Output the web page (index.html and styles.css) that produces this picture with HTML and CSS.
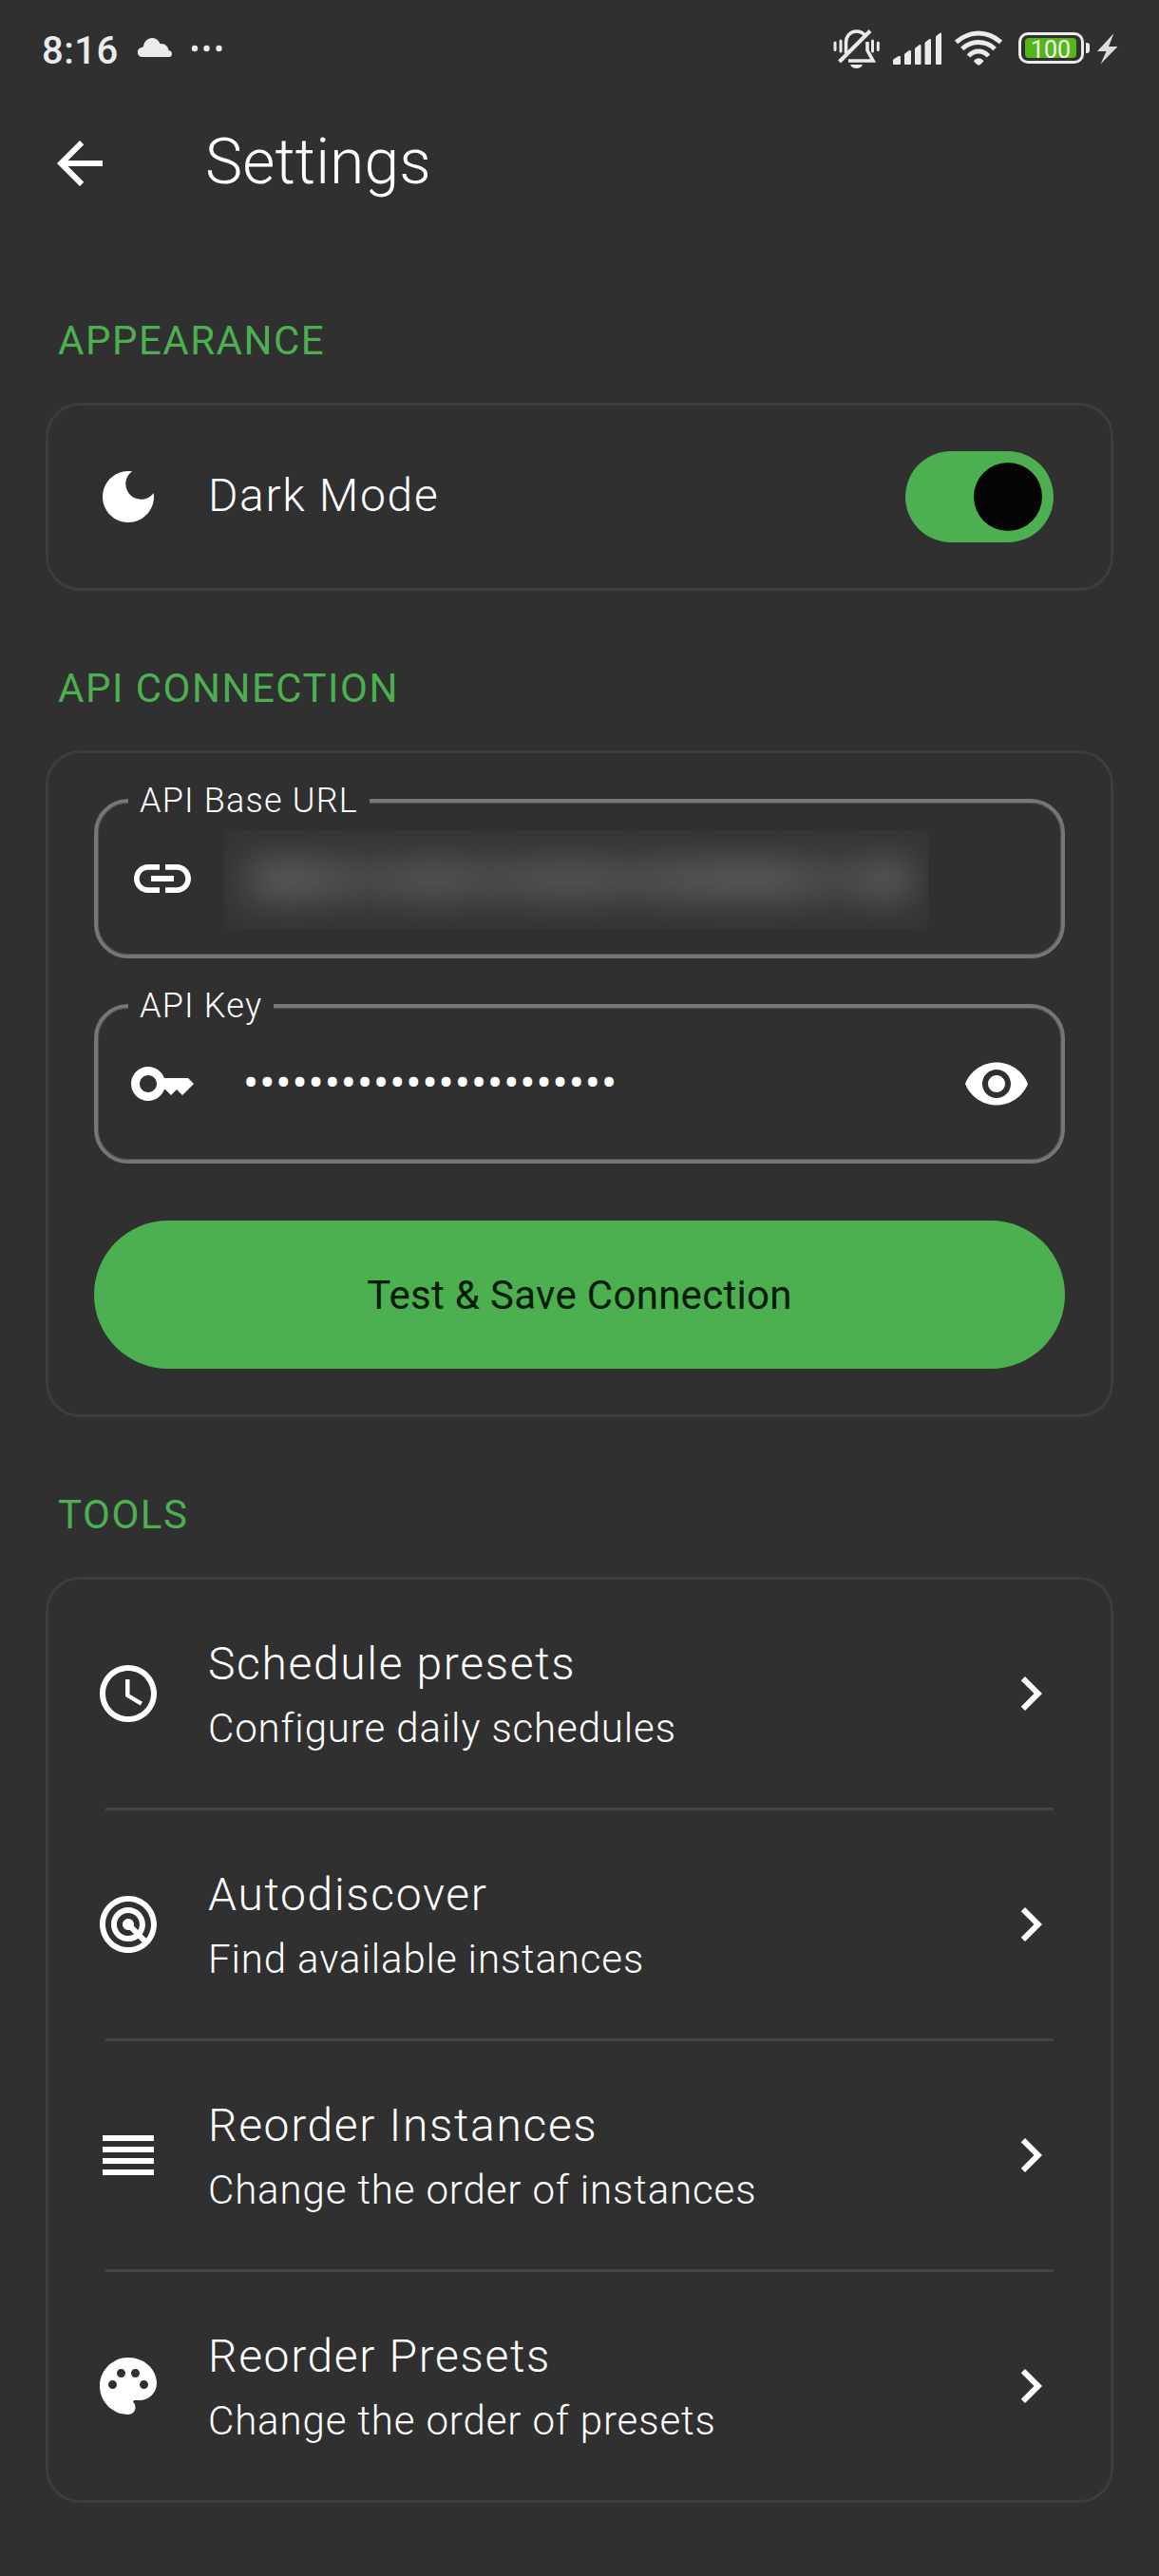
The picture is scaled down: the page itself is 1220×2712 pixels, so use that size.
FILE: index.html
```html
<!DOCTYPE html>
<html lang="en">
<head>
<meta charset="utf-8">
<title>Settings</title>
<link rel="stylesheet" href="styles.css">
</head>
<body>
<header class="status">
  <span class="clock">8:16</span>
  <svg class="cloud" width="36" height="20" viewBox="0 0 36 20"><path d="M5 20a5 5 0 0 1-.6-10A5.500 5.500 0 0 1 6 9C6.500 3.500 10.500 0 15 0c4 0 7 2.200 8.500 6.200C28 5.500 32 8.500 32.500 13 35 13.200 36 15 36 16.700 36 18.700 34.600 20 33 20z"/></svg>
  <svg class="more" width="34" height="8" viewBox="0 0 34 8"><circle cx="4" cy="4" r="3.200"/><circle cx="16.500" cy="4" r="3.200"/><circle cx="29.500" cy="4" r="3.200"/></svg>
  <div class="status-right">
    <svg width="49" height="102" viewBox="876 0 49 102">
      <g fill="none" stroke="#ebebeb" stroke-width="3.600">
        <path d="M889.500 56V45C889.500 38 894 33 900.500 33c4 0 7 1.500 9 4.500M912 44v9l6 11H892"/>
        <path d="M882.500 65 915 32.500" stroke-width="4"/>
        <path d="M878 45v7.500M884 43v11M917.500 43v11M923.300 45v7.500" stroke-width="3" stroke-linecap="round"/>
      </g>
      <path d="M894 68h13c-1 2.500-3.500 4-6.500 4s-5.500-1.500-6.500-4z"/>
    </svg>
    <svg width="51" height="102" viewBox="940 0 51 102"><path d="M940 63.500q0-1 1-1.500l5-3q2-.5 2 1V67q0 1-1 1h-6q-1 0-1-1zM952 57.500q0-1 1-1.500l4-3q2-.5 2 1V67q0 1-1 1h-5q-1 0-1-1zM963 51.500q0-1 1-1.500l4-3q1.500-.5 1.500 1V67q0 1-1 1H964q-1 0-1-1zM973.500 45.500q0-1 1-1.500l4-3q1.500-.5 1.500 1V67q0 1-1 1h-4.500q-1 0-1-1zM985 39q0-1 1-1.500l3.500-2.800q1.500-.5 1.500 1V67q0 1-1 1h-4q-1 0-1-1z"/></svg>
    <svg width="50" height="102" viewBox="1005 0 50 102">
      <g fill="none" stroke="#ebebeb" stroke-width="4.800"><path d="M1006.500 44.500q10.500-9.500 23.500-9.500t23.500 9.500"/><path d="M1012.800 51.500q7.200-7 17.200-7t17.200 7"/><path d="M1019.500 59q4.500-5 10.500-5t10.500 5"/></g>
      <path d="M1025 64q2-2.800 5.200-2.800t5.200 2.800q.3 1-5.200 5-5.500-4-5.200-5z"/>
    </svg>
    <div class="battery"><span>100</span></div>
    <svg class="bolt" width="22" height="102" viewBox="1155 0 22 102"><path d="M1172.500 35 1155 54h9.500L1158.500 67.500 1176.500 49h-9.500z" fill="#dcdcdc"/></svg>
  </div>
</header>

<div class="appbar">
  <svg class="icon" viewBox="0 0 24 24"><path d="M20 11H7.830l5.590-5.590L12 4l-8 8 8 8 1.410-1.410L7.830 13H20v-2z"/></svg>
  <h1>Settings</h1>
</div>

<main>
  <h2>APPEARANCE</h2>
  <section class="card">
    <div class="row dark-mode">
      <svg class="icon" viewBox="0 0 24 24"><path d="M12 3c-4.970 0-9 4.030-9 9s4.030 9 9 9 9-4.030 9-9c0-.46-.04-.92-.1-1.360-.98 1.370-2.580 2.260-4.400 2.260-2.980 0-5.400-2.420-5.400-5.400 0-1.810.89-3.420 2.260-4.400-.44-.06-.9-.1-1.360-.1z"/></svg>
      <div class="labels"><div class="title">Dark Mode</div></div>
      <div class="switch"><div class="thumb"></div></div>
    </div>
  </section>

  <h2>API CONNECTION</h2>
  <section class="card connection">
    <div class="field">
      <label>API Base URL</label>
      <svg class="icon" viewBox="0 0 24 24"><path d="M3.900 12c0-1.710 1.390-3.100 3.100-3.100h4V7H7c-2.760 0-5 2.240-5 5s2.240 5 5 5h4v-1.900H7c-1.710 0-3.100-1.390-3.100-3.100zM8 13h8v-2H8v2zm9-6h-4v1.900h4c1.710 0 3.100 1.390 3.100 3.100s-1.390 3.100-3.100 3.100h-4V17h4c2.760 0 5-2.240 5-5s-2.240-5-5-5z"/></svg>
      <div class="redacted"></div>
    </div>
    <div class="field">
      <label>API Key</label>
      <svg class="icon" viewBox="0 0 24 24"><path d="M21 10h-8.350C11.830 7.670 9.610 6 7 6c-3.310 0-6 2.690-6 6s2.690 6 6 6c2.610 0 4.830-1.670 5.650-4H13l2 2 2-2 2 2 4-4.040L21 10zM7 15c-1.650 0-3-1.350-3-3s1.350-3 3-3 3 1.350 3 3-1.350 3-3 3z"/></svg>
      <span class="secret">•••••••••••••••••••••••</span>
      <svg class="icon" viewBox="0 0 24 24"><path d="M12 4.500C7 4.500 2.730 7.610 1 12c1.730 4.390 6 7.500 11 7.500s9.270-3.110 11-7.500c-1.730-4.390-6-7.500-11-7.500zM12 17c-2.760 0-5-2.240-5-5s2.240-5 5-5 5 2.240 5 5-2.240 5-5 5zm0-8c-1.660 0-3 1.340-3 3s1.340 3 3 3 3-1.340 3-3-1.340-3-3-3z"/></svg>
    </div>
    <button>Test &amp; Save Connection</button>
  </section>

  <h2>TOOLS</h2>
  <section class="card">
    <div class="row">
      <svg class="icon" viewBox="0 0 24 24"><path d="M11.990 2C6.470 2 2 6.480 2 12s4.470 10 9.990 10C17.520 22 22 17.520 22 12S17.520 2 11.990 2zM12 20c-4.420 0-8-3.580-8-8s3.580-8 8-8 8 3.580 8 8-3.580 8-8 8zm.5-13H11v6l5.250 3.150.75-1.230-4.500-2.670z"/></svg>
      <div class="labels"><div class="title">Schedule presets</div><div class="sub">Configure daily schedules</div></div>
      <svg class="icon" viewBox="0 0 24 24"><path d="M10 6 8.590 7.410 13.170 12l-4.580 4.590L10 18l6-6z"/></svg>
    </div>
    <div class="divider"></div>
    <div class="row">
      <svg class="icon" viewBox="0 0 24 24"><path d="M19.740 18.330C21.150 16.600 22 14.400 22 12c0-5.520-4.480-10-10-10S2 6.480 2 12s4.480 10 10 10c2.400 0 4.600-.85 6.330-2.260.27-.22.53-.46.78-.71.03-.03.05-.06.07-.08.2-.2.39-.41.56-.62zM12 20c-4.410 0-8-3.590-8-8s3.590-8 8-8 8 3.590 8 8c0 1.850-.63 3.540-1.690 4.900l-1.430-1.430c.69-.98 1.100-2.170 1.100-3.460 0-3.310-2.690-6-6-6s-6 2.690-6 6 2.690 6 6 6c1.300 0 2.510-.42 3.490-1.130l1.420 1.420C15.540 19.370 13.850 20 12 20zm1.920-7.490c.17-.66.02-1.380-.49-1.900l-.02-.02c-.77-.77-2-.78-2.780-.04-.01.01-.03.02-.05.04-.78.78-.78 2.050 0 2.830l.02.02c.52.51 1.250.67 1.910.49l1.510 1.510c-.6.36-1.290.58-2.040.58-2.210 0-4-1.790-4-4s1.790-4 4-4 4 1.790 4 4c0 .73-.21 1.410-.56 2l-1.500-1.510z"/></svg>
      <div class="labels"><div class="title">Autodiscover</div><div class="sub">Find available instances</div></div>
      <svg class="icon" viewBox="0 0 24 24"><path d="M10 6 8.590 7.410 13.170 12l-4.580 4.590L10 18l6-6z"/></svg>
    </div>
    <div class="divider"></div>
    <div class="row">
      <svg class="icon" viewBox="0 0 24 24"><path d="M3 5h18v2H3zM3 9h18v2H3zM3 13h18v2H3zM3 17h18v2H3z"/></svg>
      <div class="labels"><div class="title">Reorder Instances</div><div class="sub">Change the order of instances</div></div>
      <svg class="icon" viewBox="0 0 24 24"><path d="M10 6 8.590 7.410 13.170 12l-4.580 4.590L10 18l6-6z"/></svg>
    </div>
    <div class="divider"></div>
    <div class="row">
      <svg class="icon" viewBox="0 0 24 24"><path d="M12 2C6.490 2 2 6.490 2 12s4.490 10 10 10c1.380 0 2.500-1.120 2.500-2.500 0-.61-.23-1.200-.64-1.670-.08-.1-.13-.21-.13-.33 0-.28.22-.5.5-.5H16c3.310 0 6-2.690 6-6 0-4.960-4.490-9-10-9zm5.500 11c-.83 0-1.500-.67-1.500-1.500s.67-1.500 1.500-1.500 1.500.67 1.500 1.500-.67 1.500-1.500 1.500zm-3-4c-.83 0-1.500-.67-1.500-1.500S13.670 6 14.500 6s1.500.67 1.500 1.500S15.330 9 14.500 9zM5 11.500c0-.83.67-1.500 1.500-1.500s1.500.67 1.500 1.500S7.330 13 6.500 13 5 12.330 5 11.500zm6-4c0 .83-.67 1.500-1.500 1.500S8 8.330 8 7.500 8.670 6 9.500 6s1.500.67 1.500 1.500z"/></svg>
      <div class="labels"><div class="title">Reorder Presets</div><div class="sub">Change the order of presets</div></div>
      <svg class="icon" viewBox="0 0 24 24"><path d="M10 6 8.590 7.410 13.170 12l-4.580 4.590L10 18l6-6z"/></svg>
    </div>
  </section>
</main>
</body>
</html>
```
FILE: styles.css
```css
* { box-sizing: border-box; }

body {
  margin: 0;
  width: 1220px;
  height: 2712px;
  overflow: hidden;
  background: #303030;
  color: #fff;
  font-family: Roboto, sans-serif;
  font-weight: 300;
}

svg { display: block; flex: none; fill: currentColor; }
.icon { width: 72px; height: 72px; }

/* Status bar */
.status { display: flex; height: 102px; padding-left: 44px; color: #ebebeb; }
.clock { width: 101px; padding-top: 30px; font-size: 40px; line-height: 47px; font-weight: 500; letter-spacing: 0.5px; }
.cloud { margin-top: 40px; }
.more { margin: 47px 0 0 20px; }
.status-right { display: flex; margin-left: auto; padding-right: 43px; }
.status-right svg + svg { margin-left: 14px; }
.battery {
  position: relative;
  width: 69px;
  height: 33px;
  margin: 34px 0 0 17px;
  padding: 3px;
  border: 3px solid #ebebeb;
  border-radius: 10px;
}
.battery::after {
  content: "";
  position: absolute;
  left: 68px;
  top: 8px;
  width: 4px;
  height: 11px;
  border-radius: 0 3px 3px 0;
  background: #ebebeb;
}
.battery span {
  display: block;
  width: 54px;
  height: 21px;
  margin-left: 1px;
  border-radius: 4px;
  background: #53b817;
  color: #f4f4f4;
  font-size: 25px;
  line-height: 26px;
  font-weight: 400;
  text-align: center;
}
.status-right .bolt { margin-left: 14px; }

/* Title bar */
.appbar { display: flex; align-items: center; height: 140px; padding-left: 48px; gap: 96px; }
h1 { margin: 0; padding-bottom: 3px; font-size: 66px; line-height: 84px; font-weight: 300; letter-spacing: 0.1px; }

main { padding: 0 48px; }
h2 {
  margin: 0;
  padding: 0 13px;
  font-size: 42px;
  line-height: 60px;
  font-weight: 400;
  letter-spacing: 1.5px;
  color: #4caf50;
}
.appbar + main h2:first-child { padding-top: 87px; }
.card + h2 { padding-top: 73px; }

.card { margin-top: 35px; border: 3px solid #3d3d3d; border-radius: 36px; }

.row { display: flex; align-items: center; height: 240px; padding: 0 48px; }
.row.dark-mode { height: 192px; padding-right: 60px; }
.labels { flex: 1; margin-left: 48px; }
.title { padding-bottom: 2px; font-size: 48px; line-height: 70px; letter-spacing: 1.65px; }
.sub { padding-top: 1px; font-size: 42px; line-height: 60px; letter-spacing: 0.88px; }
.divider { height: 3px; margin: 0 60px; background: #444; }

.switch { width: 156px; height: 96px; padding: 12px; border-radius: 48px; background: #4caf50; }
.thumb { width: 72px; height: 72px; margin-left: auto; border-radius: 50%; background: #050505; }

/* Connection form */
.connection { display: flex; flex-direction: column; padding: 48px; }
.field {
  position: relative;
  display: flex;
  align-items: center;
  height: 168px;
  padding: 0 32px;
  border: 4px solid #767676;
  border-radius: 36px;
  box-shadow: inset 0 0 0 1px #505050;
}
.field + .field { margin-top: 48px; }
.field label {
  position: absolute;
  left: 32px;
  top: -26px;
  padding: 0 12px;
  background: #303030;
  font-size: 36px;
  line-height: 48px;
  letter-spacing: 1.2px;
}
.redacted {
  width: 741px;
  height: 104px;
  margin: 2px 0 0 29px;
  padding: 31px 18px 0 24px;
  overflow: hidden;
  background: #343434;
}
.redacted::before {
  content: "";
  display: block;
  height: 42px;
  filter: blur(19px);
  background: linear-gradient(90deg, #5a5a5a 0, #5e5e5e 55px, #4b4b4b 125px, #5a5a5a 200px, #4e4e4e 250px, #595959 340px, #505050 405px, #595959 465px, #5e5e5e 545px, #494949 625px, #606060 680px);
}
.secret { flex: 1; margin-left: 49px; font-size: 48px; line-height: 60px; font-weight: 400; letter-spacing: 0.94px; }

button {
  height: 156px;
  margin-top: 60px;
  padding: 1px 0 0;
  border: 0;
  border-radius: 78px;
  background: #4caf50;
  color: #001a03;
  font: 400 42px/60px Roboto, sans-serif;
  letter-spacing: 0.3px;
}
```
